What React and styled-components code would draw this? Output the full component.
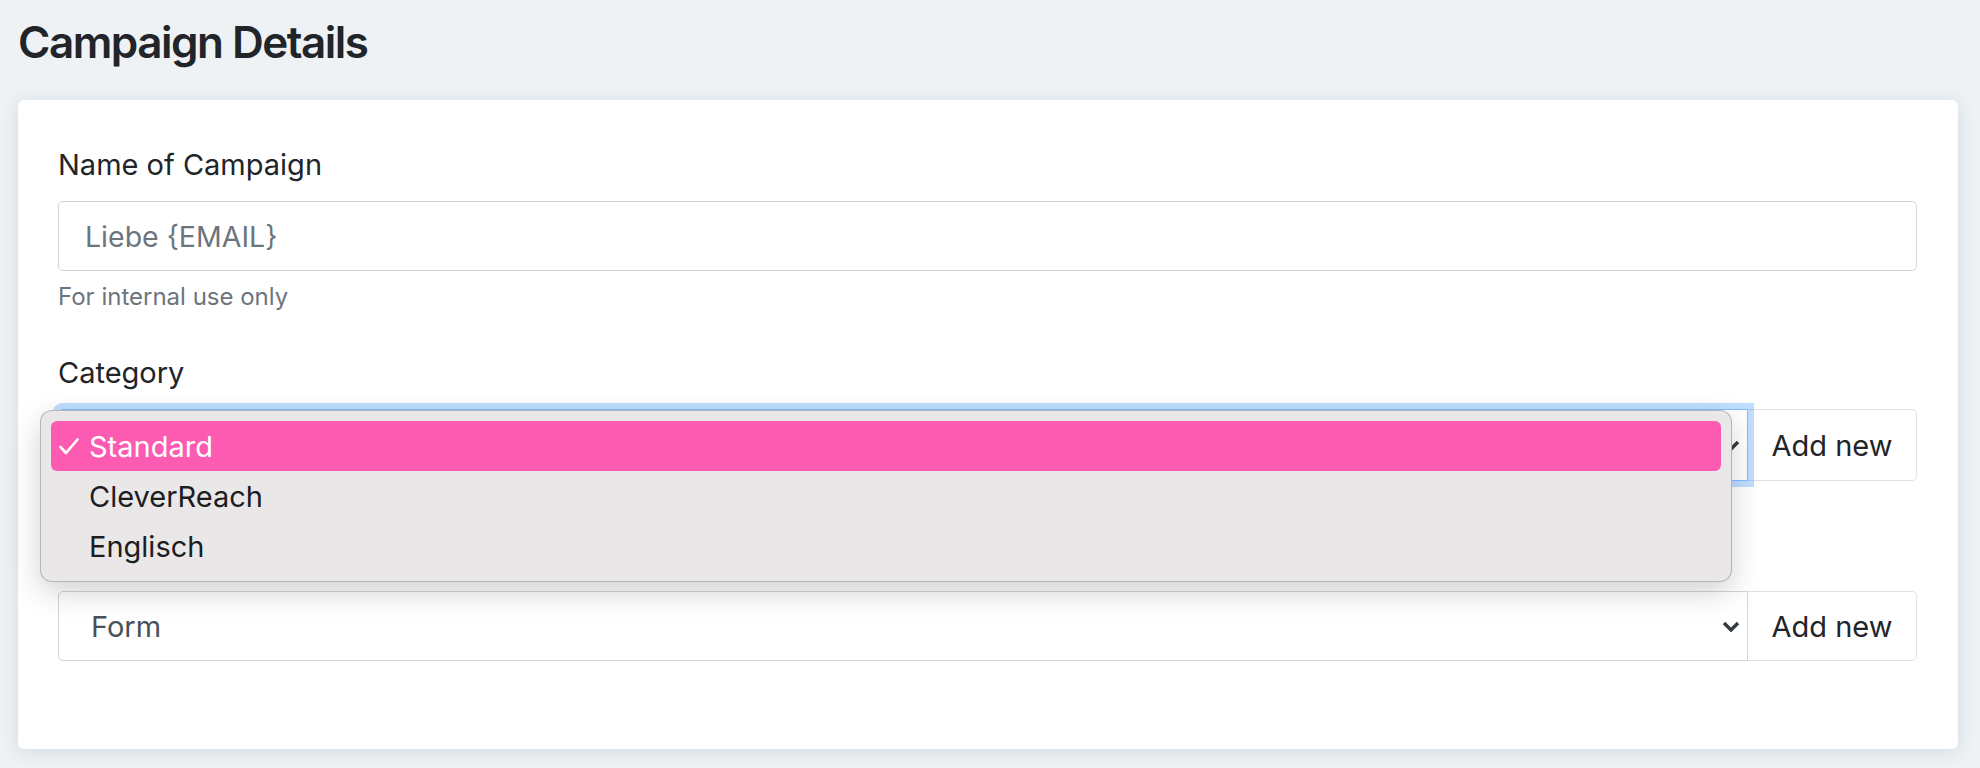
import React from 'react'
import styled, { createGlobalStyle } from 'styled-components'

const GlobalStyle = createGlobalStyle`
  body {
    margin: 0;
    background: #eef2f5;
    font-family: Inter, "Noto Sans", sans-serif;
    color: #212529;
  }
`

const categories = ['Standard', 'CleverReach', 'Englisch']

const Chevron = () => (
  <svg width="18" height="11" viewBox="0 0 18 11">
    <path d="M2 2 L9 9 L16 2" fill="none" stroke="#343a40" strokeWidth="3.4" strokeLinejoin="miter" />
  </svg>
)

const Check = () => (
  <svg width="20" height="17" viewBox="0 0 20 17">
    <path d="M1.5 9 L7 15 L18.5 1.5" fill="none" stroke="#fff" strokeWidth="2.6" strokeLinecap="round" strokeLinejoin="round" />
  </svg>
)

const App = () => {
  return (
    <Page>
      <GlobalStyle />
      <Title>Campaign Details</Title>
      <Card>
        <Field $space={36}>
          <Label>Name of Campaign</Label>
          <TextInput placeholder="Liebe {EMAIL}" />
          <Help>For internal use only</Help>
        </Field>

        <Field $space={110}>
          <Label>Category</Label>
          <InputGroup $h={72}>
            <SelectBox $focus>
              <span>Standard</span>
              <Chevron />
            </SelectBox>
            <AddButton>Add new</AddButton>
            <Menu>
              {categories.map((c, i) => (
                <Option key={c} $active={i === 0}>
                  <CheckSlot>{i === 0 && <Check />}</CheckSlot>
                  {c}
                </Option>
              ))}
            </Menu>
          </InputGroup>
        </Field>

        <Field $space={0}>
          <InputGroup $h={70}>
            <SelectBox>
              <span>Form</span>
              <Chevron />
            </SelectBox>
            <AddButton>Add new</AddButton>
          </InputGroup>
        </Field>
      </Card>
    </Page>
  )
}

export default App

const Page = styled.div`
  padding: 16px 22px 19px 18px;
`

const Title = styled.h1`
  margin: 0 0 32px;
  font-size: 44px;
  line-height: 52px;
  font-weight: 600;
  letter-spacing: -1.5px;
  color: #212529;
`

const Card = styled.div`
  background: #fff;
  border-radius: 6px;
  box-shadow: 0 3px 18px rgba(40, 60, 80, 0.13);
  padding: 43px 41px 88px 40px;
`

const Field = styled.div`
  margin-bottom: ${p => p.$space}px;
`

const Label = styled.label`
  display: block;
  font-size: 29px;
  line-height: 43px;
  margin-bottom: 15px;
  color: #212529;
`

const TextInput = styled.input`
  display: block;
  width: 100%;
  box-sizing: border-box;
  height: 70px;
  padding: 0 26px;
  border: 1px solid #ced4da;
  border-radius: 5px;
  font-family: Inter, sans-serif;
  font-size: 28.5px;
  color: #495057;
  outline: none;
  &::placeholder {
    color: #6c757d;
  }
`

const Help = styled.div`
  margin-top: 8px;
  font-size: 24px;
  line-height: 36px;
  color: #6c757d;
`

const InputGroup = styled.div`
  position: relative;
  display: flex;
  height: ${p => p.$h}px;
`

const SelectBox = styled.div`
  position: relative;
  z-index: ${p => (p.$focus ? 2 : 1)};
  flex: 1;
  display: flex;
  align-items: center;
  justify-content: space-between;
  padding: 0 7px 0 32px;
  border: 1px solid ${p => (p.$focus ? '#80bdff' : '#ced4da')};
  border-radius: 5px 0 0 5px;
  box-shadow: ${p => (p.$focus ? '0 0 0 6px rgba(0, 123, 255, 0.25)' : 'none')};
  background: #fff;
  font-size: 29px;
  color: #495057;
`

const AddButton = styled.button`
  width: 170px;
  margin-left: -1px;
  border: 1px solid #dee2e6;
  border-radius: 0 5px 5px 0;
  background: #fff;
  font-family: Inter, sans-serif;
  font-size: 29px;
  color: #212529;
  padding: 0;
`

const Menu = styled.div`
  position: absolute;
  z-index: 5;
  top: 1px;
  left: -18px;
  width: 1692px;
  box-sizing: border-box;
  padding: 10px;
  background: #e9e7e8;
  border: 1px solid rgba(0, 0, 0, 0.22);
  border-radius: 12px;
  box-shadow: 0 10px 30px rgba(0, 0, 0, 0.18);
`

const Option = styled.div`
  display: flex;
  align-items: center;
  height: 50px;
  padding-left: 8px;
  border-radius: 6px;
  font-size: 29px;
  background: ${p => (p.$active ? '#fd5bb1' : 'transparent')};
  color: ${p => (p.$active ? '#fff' : '#1d1d1f')};
`

const CheckSlot = styled.span`
  display: inline-flex;
  align-items: center;
  width: 30px;
`
